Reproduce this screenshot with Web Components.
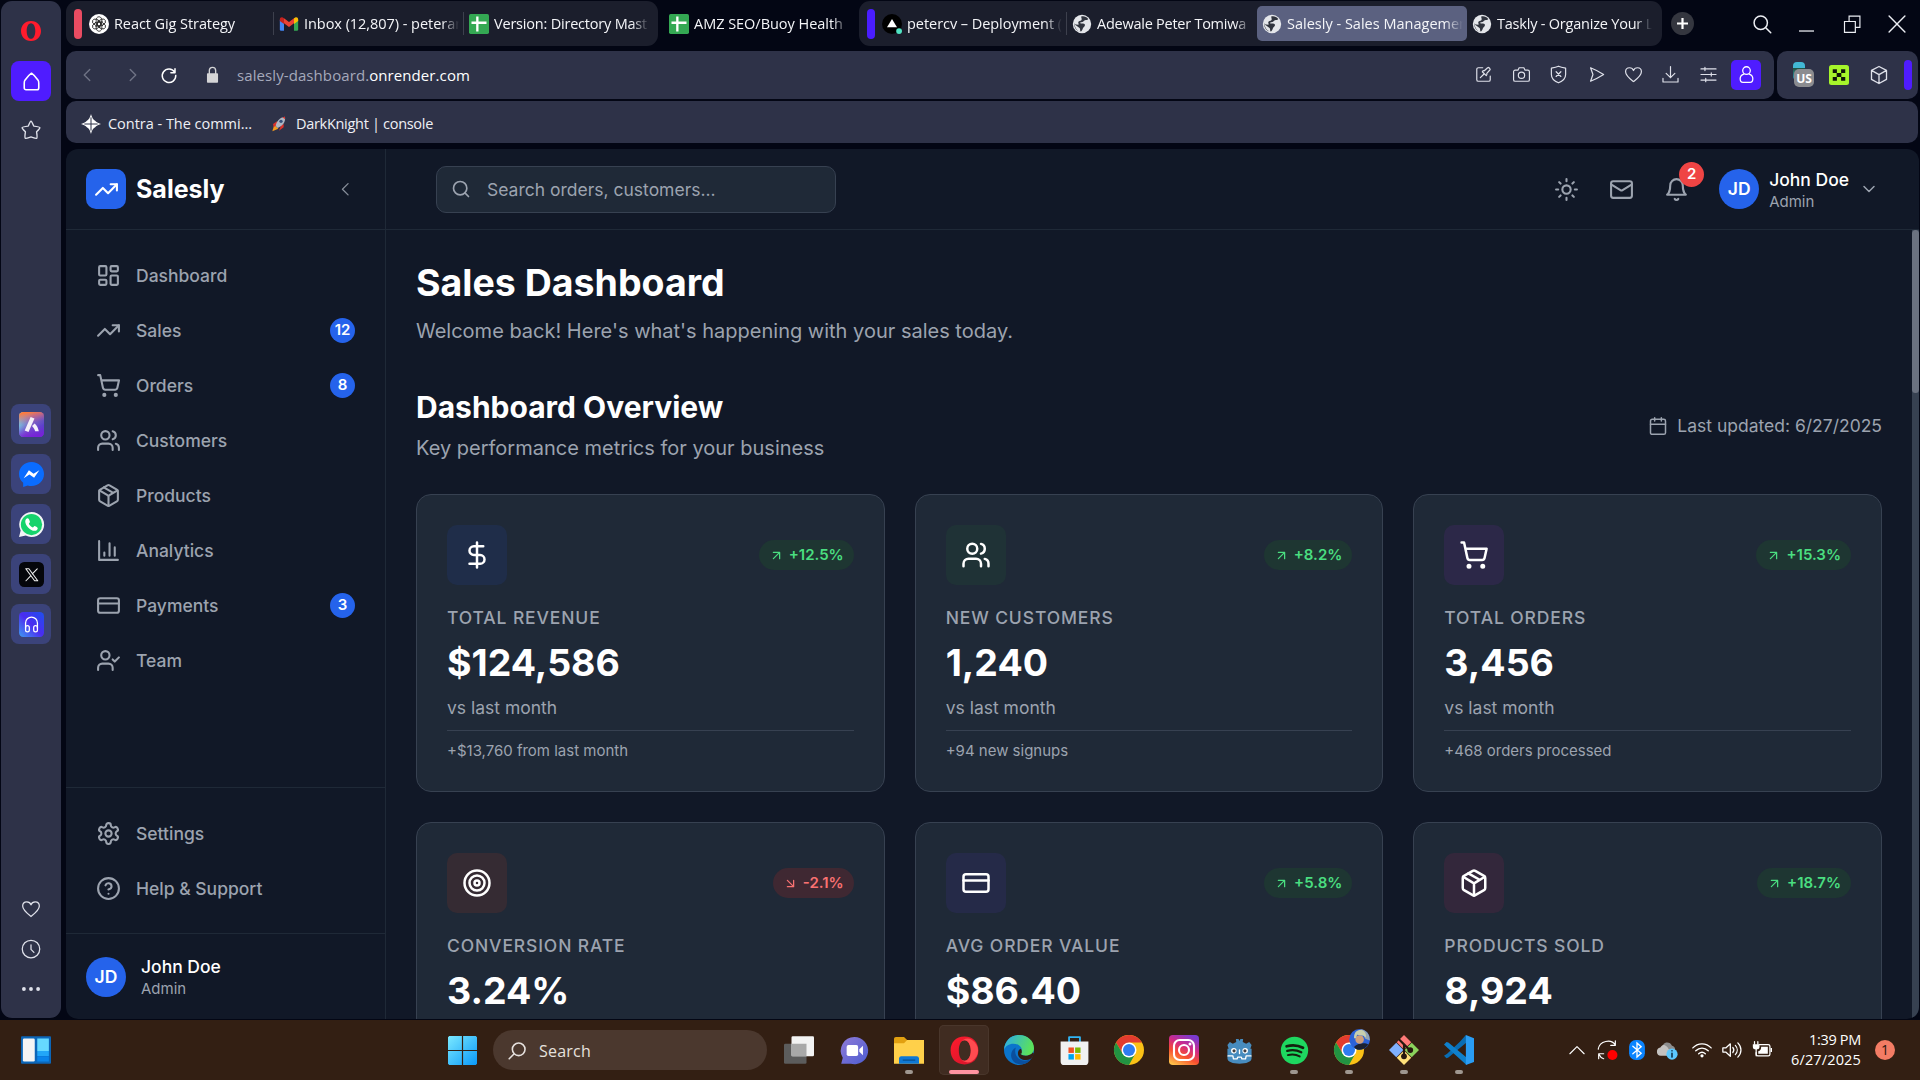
<!DOCTYPE html>
<html lang="en">
<head>
<meta charset="utf-8">
<title>Salesly - Sales Management</title>
<style>
html,body{margin:0;width:1920px;height:1080px;overflow:hidden;background:#030614}
body{font-family:Inter,"Liberation Sans",sans-serif;color:#fff}
</style>
</head>
<body>
<desktop-screen></desktop-screen>
<script>
const ICONS = {
  dashboard:'<rect x="3" y="3" width="7" height="9" rx="1"/><rect x="14" y="3" width="7" height="5" rx="1"/><rect x="14" y="12" width="7" height="9" rx="1"/><rect x="3" y="16" width="7" height="5" rx="1"/>',
  trend:'<path d="M22 7 13.5 15.5 8.5 10.5 2 17"/><path d="M16 7h6v6"/>',
  cart:'<circle cx="8" cy="21" r="1"/><circle cx="19" cy="21" r="1"/><path d="M2.05 2.05h2l2.66 12.42a2 2 0 0 0 2 1.58h9.78a2 2 0 0 0 1.95-1.57l1.65-7.43H5.12"/>',
  users:'<path d="M16 21v-2a4 4 0 0 0-4-4H6a4 4 0 0 0-4 4v2"/><circle cx="9" cy="7" r="4"/><path d="M22 21v-2a4 4 0 0 0-3-3.87M16 3.13a4 4 0 0 1 0 7.75"/>',
  package:'<path d="M11 21.73a2 2 0 0 0 2 0l7-4A2 2 0 0 0 21 16V8a2 2 0 0 0-1-1.73l-7-4a2 2 0 0 0-2 0l-7 4A2 2 0 0 0 3 8v8a2 2 0 0 0 1 1.73z"/><path d="M12 22V12M3.3 7l7.703 4.734a2 2 0 0 0 1.994 0L20.7 7M7.5 4.27l9 5.15"/>',
  chart:'<path d="M3 3v18h18M18 17V9M13 17V5M8 17v-3"/>',
  card:'<rect x="2" y="5" width="20" height="14" rx="2"/><path d="M2 10h20"/>',
  usercheck:'<path d="M16 21v-2a4 4 0 0 0-4-4H6a4 4 0 0 0-4 4v2"/><circle cx="9" cy="7" r="4"/><path d="M16 11l2 2 4-4"/>',
  settings:'<path d="M12.22 2h-.44a2 2 0 0 0-2 2v.18a2 2 0 0 1-1 1.73l-.43.25a2 2 0 0 1-2 0l-.15-.08a2 2 0 0 0-2.73.73l-.22.38a2 2 0 0 0 .73 2.73l.15.1a2 2 0 0 1 1 1.72v.51a2 2 0 0 1-1 1.74l-.15.09a2 2 0 0 0-.73 2.73l.22.38a2 2 0 0 0 2.73.73l.15-.08a2 2 0 0 1 2 0l.43.25a2 2 0 0 1 1 1.73V20a2 2 0 0 0 2 2h.44a2 2 0 0 0 2-2v-.18a2 2 0 0 1 1-1.73l.43-.25a2 2 0 0 1 2 0l.15.08a2 2 0 0 0 2.73-.73l.22-.39a2 2 0 0 0-.73-2.73l-.15-.08a2 2 0 0 1-1-1.74v-.5a2 2 0 0 1 1-1.74l.15-.09a2 2 0 0 0 .73-2.73l-.22-.38a2 2 0 0 0-2.73-.73l-.15.08a2 2 0 0 1-2 0l-.43-.25a2 2 0 0 1-1-1.73V4a2 2 0 0 0-2-2z"/><circle cx="12" cy="12" r="3"/>',
  help:'<circle cx="12" cy="12" r="10"/><path d="M9.09 9a3 3 0 0 1 5.83 1c0 2-3 3-3 3M12 17h.01"/>',
  left:'<path d="m15 18-6-6 6-6"/>', right:'<path d="m9 18 6-6-6-6"/>', down:'<path d="m6 9 6 6 6-6"/>',
  search:'<circle cx="11" cy="11" r="8"/><path d="m21 21-4.3-4.3"/>',
  sun:'<circle cx="12" cy="12" r="4"/><path d="M12 2v2M12 20v2M4.93 4.93l1.41 1.41M17.66 17.66l1.41 1.41M2 12h2M20 12h2M6.34 17.66l-1.41 1.41M19.07 4.93l-1.41 1.41"/>',
  mail:'<rect x="2" y="4" width="20" height="16" rx="2"/><path d="m22 7-8.97 5.7a1.94 1.94 0 0 1-2.06 0L2 7"/>',
  bell:'<path d="M6 8a6 6 0 0 1 12 0c0 7 3 9 3 9H3s3-2 3-9M10.3 21a1.94 1.94 0 0 0 3.4 0"/>',
  calendar:'<rect x="3" y="4" width="18" height="18" rx="2"/><path d="M8 2v4M16 2v4M3 10h18"/>',
  up:'<path d="M7 7h10v10M7 17 17 7"/>', dn:'<path d="m7 7 10 10M17 7v10H7"/>',
  dollar:'<path d="M12 2v20M17 5H9.5a3.5 3.5 0 0 0 0 7h5a3.5 3.5 0 0 1 0 7H6"/>',
  target:'<circle cx="12" cy="12" r="10"/><circle cx="12" cy="12" r="6"/><circle cx="12" cy="12" r="2"/>',
  /* browser chrome */
  opera:'<path fill="#ff1b2d" stroke="none" fill-rule="evenodd" d="M12 2c6.300 0 10 4.600 10 10s-3.700 10-10 10S2 17.400 2 12 5.700 2 12 2zm0 2.200c-2.800 0-4.300 3.600-4.300 7.800s1.500 7.800 4.300 7.800 4.300-3.600 4.300-7.800-1.500-7.800-4.300-7.800z"/>',
  home:'<path d="M12 2.500c3 2 5 4.500 7.500 8 .6.900.8 2 .8 3.500v5.500a2 2 0 0 1-2 2H5.700a2 2 0 0 1-2-2V14c0-1.500.2-2.600.8-3.500C7 7 9 4.500 12 2.500z"/>',
  star:'<path d="M12 2.500c.6 0 1 .6 3 5.200 5 .6 6.500.9 6.700 1.700.2.700-.5 1.500-3.600 4.600.6 4.600.9 6.300.2 6.900-.7.500-2 0-6.300-1.300-4.300 1.300-5.600 1.800-6.300 1.300-.7-.6-.4-2.300.2-6.900-3.100-3.100-3.800-3.900-3.600-4.600.2-.8 1.700-1.100 6.700-1.700 2-4.600 2.400-5.200 3-5.200z"/>',
  heart:'<path d="M12 21C9.500 19 2 13.500 2 8.500 2 5.500 4 3.500 7 3.500c2.300 0 4.200 1.300 5 3.500.8-2.200 2.700-3.500 5-3.500 3 0 5 2 5 5 0 5-7.500 10.500-10 12.500z"/>',
  clock:'<circle cx="12" cy="12" r="10.500"/><path d="M12 7v5.500l3.500 3.500"/>',
  dots:'<g fill="currentColor" stroke="none"><circle cx="3.500" cy="12" r="2.300"/><circle cx="12" cy="12" r="2.300"/><circle cx="20.500" cy="12" r="2.300"/></g>',
  reload:'<path d="M19.500 8A9 9 0 1 0 21 12.500M20 3.500V9h-5.500"/>',
  lock:'<path d="M8 11V7a4 4 0 0 1 8 0v4"/><rect x="5" y="10.500" width="14" height="12" rx="1" fill="currentColor" stroke="none"/>',
  edit:'<path d="M11 3.500H5.500a2 2 0 0 0-2 2v13a2 2 0 0 0 2 2h13a2 2 0 0 0 2-2V14M8 16l5-5M10.500 8.500l5 5c1-1 1-2 .7-3l3.800-4.200c.8-.8.8-1 0-1.800l-1-1c-.8-.8-1-.8-1.800 0l-4.200 3.800c-1-.3-1.800 0-2.500 1.200z"/>',
  camera:'<path d="M4 6.500h3.500L9 3.500h6l1.500 3H20a2 2 0 0 1 2 2v10a2 2 0 0 1-2 2H4a2 2 0 0 1-2-2v-10a2 2 0 0 1 2-2z"/><circle cx="12" cy="13" r="4"/>',
  shield:'<path d="M12 1.500c3 1.500 6 2 9 2.500v8c0 5-4 8.500-9 10.500-5-2-9-5.500-9-10.500V4c3-.5 6-1 9-2.500z"/><path d="m9 8.500 6 6M15 8.500l-6 6"/>',
  send:'<path d="M4.500 3.500c5 2 11 5 16.500 8.500-5.500 3.500-11.500 6.500-16.500 8.500l3-8.500z"/>',
  download:'<path d="M12 2v14M6.500 10.500 12 16l5.500-5.500M2.500 17v4.500h19V17"/>',
  sliders:'<path d="M2.500 5h19M2.500 12h19M2.500 19h19M7.500 3v4M15.500 10v4M8.500 17v4"/>',
  person:'<circle cx="12" cy="7" r="4.800"/><path d="M8.500 11.500c-3 1-4.500 2.700-4.500 6 0 3 1 4.500 3.500 4.500h9c2.500 0 3.500-1.500 3.500-4.500 0-3.300-1.500-5-4.500-6"/>',
  cube:'<path d="m12 1.800 9 4.700v10.800L12 22.200l-9-4.900V6.500zM3 6.500l9 5 9-5M12 11.500v10.700"/>',
  contra:'<path fill="#fff" stroke="none" d="M12 0c1.500 5 2.500 6.500 5 8 1.500 1.800 3 2.700 7 4-4 1.300-5.500 2.200-7 4-2.500 1.500-3.500 3-5 8-1.500-5-2.500-6.500-5-8-1.500-1.800-3-2.700-7-4 4-1.300 5.500-2.200 7-4 2.500-1.500 3.500-3 5-8z"/><path stroke="#2e3248" stroke-width="1.200" d="M12 4.500v15M4.500 12h15"/>',
  rocket:'<g stroke="none"><path fill="#f59b1e" d="M5 13 2 23l9-4z"/><path fill="#d9322b" d="m9 8-6 4 1 5 5-4zM15 14l-3 8 7-5v-5z"/><path fill="#aeb6c2" d="M7 15C8 8 13 2 21 1c1 8-3 13-11 17z"/><path fill="#d9322b" d="M17 1.800 21 1l.1 4z"/><circle cx="15" cy="8" r="2.500" fill="#35507c"/></g>',
  gpt:'<circle cx="12" cy="12" r="12" fill="#fff" stroke="none"/><g stroke="#222" stroke-width="1"><ellipse cx="12" cy="8.800" rx="3.500" ry="5.500"/><ellipse cx="12" cy="8.800" rx="3.500" ry="5.500" transform="rotate(60 12 12)"/><ellipse cx="12" cy="8.800" rx="3.500" ry="5.500" transform="rotate(120 12 12)"/><ellipse cx="12" cy="8.800" rx="3.500" ry="5.500" transform="rotate(180 12 12)"/><ellipse cx="12" cy="8.800" rx="3.500" ry="5.500" transform="rotate(240 12 12)"/><ellipse cx="12" cy="8.800" rx="3.500" ry="5.500" transform="rotate(300 12 12)"/></g>',
  gmail:'<g stroke="none"><path fill="#4285f4" d="M1 7v11.500A1.500 1.500 0 0 0 2.500 20H6V10z"/><path fill="#34a853" d="M18 10v10h3.500a1.500 1.500 0 0 0 1.500-1.500V7z"/><path fill="#ea4335" d="M6 11V5l6 4.500L18 5v6l-6 4.500z"/><path fill="#c5221f" d="M1 6.500v2L6 12V5L4.500 4.200C3 3.200 1 4.200 1 6.500z"/><path fill="#fbbc04" d="M23 6.500v2L18 12V5l1.500-.8C21 3.200 23 4.200 23 6.500z"/></g>',
  sheets:'<rect width="24" height="24" rx="2" fill="#34a853" stroke="none"/><path stroke="#fff" stroke-width="2.800" stroke-linecap="butt" d="M10 3v18M3 10.500h18"/>',
  vercel:'<circle cx="12" cy="12" r="12" fill="#000" stroke="none"/><path fill="#fff" stroke="none" d="m12 6 6 10H6z"/><circle cx="20.500" cy="20.500" r="3.500" fill="#50e3c2" stroke="none"/>',
  globe:'<circle cx="12" cy="12" r="11" fill="#e4e6ea" stroke="none"/><path fill="#30343e" stroke="none" d="M11 3c3-1 6.500.2 8.500 3-1 1.500-2.500 1-4 1.500-1.500.8-2 2.500-4.500 2.500-2 .2-1.500 1.500 0 1.500 2 0 4-.2 4.500 1.500.5 2-2 2.500-2.500 4.500-.5 1.500-1.500 3.500-2.500 3.500s-.5-2-1-3.500C9 16 6 15 4.500 13.500L3 11c0 5 3 9 7 10C5 20.500 2.500 16 2.700 11.500c1.500 1 3.300 1.500 4.800 1.500 1.500-.5-1-2.500.5-4 1.500-1 3-.5 3.500-2C12 5.500 11 4.500 11 3z"/>',
  magnify:'<circle cx="10.500" cy="10.500" r="8"/><path d="m16.500 16.500 6 6"/>',
  minimize:'<path stroke-linecap="butt" d="M2.500 21.500h19"/>',
  restore:'<path stroke-linejoin="miter" d="M3 9h13v13H3zM8.500 9V2.500h13V16H16"/>',
  close:'<path d="m2.500 2.500 19 19M21.500 2.500l-19 19"/>',
  grass:'<rect width="24" height="24" rx="3" fill="#a6f52b" stroke="none"/><path fill="#10160a" stroke="none" d="M4.500 5h5v4.700h5V5h5v4.700h-4.700v4.600h4.700V19h-5v-4.700h-5V19h-5v-4.700h4.700V9.700H4.500z"/>',
  /* sidebar applications */
  aria:'<defs><linearGradient id="a" x1="0" y1=".3" x2="1" y2=".7"><stop stop-color="#6adcea"/><stop offset=".45" stop-color="#7a60c8"/><stop offset="1" stop-color="#4c46c8"/></linearGradient><linearGradient id="b" x1=".4" y1="0" x2=".6" y2="1"><stop stop-color="#ff7a3c"/><stop offset=".45" stop-color="#d0609a" stop-opacity=".1"/><stop offset=".6" stop-color="#7a20d8" stop-opacity=".2"/><stop offset="1" stop-color="#7a20d8"/></linearGradient></defs><rect width="24" height="24" rx="4" fill="url(#a)" stroke="none"/><rect width="24" height="24" rx="4" fill="url(#b)" stroke="none"/><path stroke="#f5f1fa" stroke-width="4" stroke-linecap="butt" d="M7.300 18.500 13 5.500"/><path fill="#f5f1fa" stroke="none" d="m12.500 13.500 2.500-2.500c2 1.500 3.500 4.500 4 7.500h-3.500c-.5-2-1.500-3.500-3-5z"/>',
  messenger:'<path fill="#0a6cff" stroke="none" d="M12 0c6.800 0 12 5 12 11.500S18.800 23 12 23c-1.300 0-2.500-.2-3.600-.5L4 24v-4C1.500 18 0 15 0 11.500 0 5 5.200 0 12 0z"/><path fill="#fff" stroke="none" d="m4.500 15.500 5-7.500 4.500 3.300 5.500-3.300-5 7.200-4.500-3.200z"/>',
  whatsapp:'<path fill="#f2f4f6" stroke="none" d="M12 0a12 12 0 1 1-5.500 22.600L0 24l1.600-6.300A12 12 0 0 1 12 0z"/><circle cx="12" cy="12" r="10.200" fill="#16d36c" stroke="none"/><path fill="#fff" stroke="none" d="M8.500 6c-1.500 0-2.500 1.500-2.500 3 0 4 5 9 9 9 1.500 0 3-1 3-2.500 0-.8-2.500-2-3-2-.7 0-1.200 1.300-1.700 1.300-1 0-3.800-2.500-3.800-3.700 0-.5 1-1 1-1.600S9.300 6 8.500 6z"/>',
  x:'<rect width="24" height="24" rx="5" fill="#05060b" stroke="none"/><path stroke="#f2f2f2" stroke-width="1" d="M6.500 6.500h3l8.500 11.500h-3zM17.500 6.500l-4.700 5M11 13.500 6.700 18"/>',
  headphones:'<defs><linearGradient id="h" x1="0" y1="1" x2="1" y2="0"><stop stop-color="#3f9bf0"/><stop offset=".5" stop-color="#4b2cf0"/><stop offset="1" stop-color="#1d50ee"/></linearGradient></defs><rect width="24" height="24" rx="4" fill="url(#h)" stroke="none"/><g stroke="#fff" stroke-width="1.200"><path d="M6.300 15.500v-5a5.700 5.700 0 0 1 11.400 0v5"/><rect x="6.300" y="13" width="3.600" height="6" rx="1.800"/><rect x="14.100" y="13" width="3.600" height="6" rx="1.800"/></g>',
  /* taskbar */
  widgets:'<g stroke="none"><rect width="24" height="22" y="1" rx=".8" fill="#0c66b8"/><rect x="1.500" y="2.800" width="9.500" height="18.400" rx="1" fill="#f4f4f4"/><rect x="13" y="2.800" width="9.300" height="10" fill="#66d9ff"/><rect x="13" y="12.800" width="9.300" height="4" fill="#22a7f8"/><rect x="13" y="17" width="9.300" height="4.200" fill="#0a84ea"/></g>',
  windows:'<defs><linearGradient id="w" gradientUnits="userSpaceOnUse" x1="0" y1="0" x2="24" y2="24"><stop stop-color="#7be9ff"/><stop offset="1" stop-color="#0a98f8"/></linearGradient></defs><path fill="url(#w)" stroke="none" d="M1 0h10.500v11.500H0V1zM12.500 0H23l1 1v10.500H12.500zM0 12.500h11.500V24H1l-1-1zM12.500 12.500H24V23l-1 1H12.500z"/>',
  taskview:'<g stroke="none"><rect x="0" y="7" width="18" height="16" rx="1" fill="#5c5c5c"/><rect x="6" y="1" width="18" height="16" rx="1" fill="#f3f3f3"/><rect x="6" y="7" width="12" height="10" fill="#a9a9a9"/></g>',
  chat:'<defs><linearGradient id="c" x1="0" y1="0" x2="1" y2="1"><stop stop-color="#8f7bd8"/><stop offset="1" stop-color="#4c5cd0"/></linearGradient></defs><path fill="url(#c)" stroke="none" d="M12 .800a11.300 11.300 0 1 1-3 22.200L1 23l1.300-5A11.300 11.300 0 0 1 12 .800z"/><rect x="5.500" y="7.500" width="9.500" height="9" rx="1.500" fill="#fff" stroke="none"/><path fill="#fff" stroke="none" d="m16 11 3-3v8l-3-3z"/>',
  explorer:'<g stroke="none"><path fill="#e2a010" d="M0 3a1.500 1.500 0 0 1 1.500-1.500H8L10.500 4H22v6H0z"/><path fill="#ffd04a" d="M0 6.500h8L10.500 4H24v19H0z"/><path fill="#0f78d4" d="M4 23v-4.500A1.800 1.800 0 0 1 5.800 17h12.400a1.800 1.800 0 0 1 1.800 1.500V23z"/><path fill="#0a5599" d="M7 19.500h10v1.200H7z"/></g>',
  operabig:'<defs><linearGradient id="o" x1="0" y1="0" x2="1" y2="1"><stop stop-color="#ff1b2d"/><stop offset="1" stop-color="#d0142a"/></linearGradient></defs><path fill="url(#o)" stroke="none" fill-rule="evenodd" d="M12 .500c7.200 0 11.500 5 11.500 11.500S19.200 23.500 12 23.500.500 18.500.500 12 4.800.500 12 .500zm0 3C9 3.500 7.300 7.500 7.300 12S9 20.500 12 20.500s5.200-4 5.200-8.500S15 3.500 12 3.500z"/><path fill="#ff4b50" stroke="none" d="M12 20.500c3 0 5.200-4 5.200-8.500S15 3.500 12 3.500c-1.500 0-2.800.8-3.500 2 2-3 6-4.500 9.500-2.500 7 4.500 7 13.500 0 18-3.500 2-7.500.5-9.500-2.500.7 1.200 2 2 3.500 2z"/>',
  edge:'<defs><linearGradient id="e" x1="0" y1="0" x2="1" y2=".3"><stop stop-color="#2aa9ee"/><stop offset="1" stop-color="#5be25b"/></linearGradient></defs><circle cx="12" cy="12" r="12" fill="#0b74cc" stroke="none"/><path fill="url(#e)" stroke="none" d="M0 12C.500 4.500 5.500 0 12 0c7 0 12 4.800 12 10.500 0 4-3 6-6.500 6-2.500 0-4.300-.8-4.300-1.700 0-.6 1-1.200 1-2.800C14.200 9 11 7 7.500 7 4 7 1 9 0 12z"/><path fill="#0a4f9e" stroke="none" d="M9.500 10c-2 5 1.500 10.500 7 10.500 2 0 4-.8 5.300-1.500C19 24 11 25 7.500 21S6 11.500 9.500 10z"/><path fill="#331f13" stroke="none" d="M13.200 14.800c0 .9 1.800 1.700 4.300 1.700 2 0 4.200-.8 5.500-2.500l1 1c-.5 2-1.500 3-2.500 4-3 1.500-7 1.500-9.500-1.500-1.500-2.500-1-5.500 1.500-6.500 1 1.300.7 2.800.7 3.800z"/>',
  store:'<path stroke="#31b5f5" stroke-width="1.500" d="M7.500 5V1h9v4"/><path fill="#f1f1f1" stroke="none" d="M.5 4.500h23V21a3 3 0 0 1-3 3h-17a3 3 0 0 1-3-3z"/><g stroke="none"><path fill="#f25022" d="M7 9.500h4.500V14H7z"/><path fill="#7fba00" d="M12.500 9.500H17V14h-4.500z"/><path fill="#00a4ef" d="M7 15h4.500v4.500H7z"/><path fill="#ffb900" d="M12.500 15H17v4.500h-4.500z"/></g>',
  chrome:'<g stroke="none"><circle cx="12" cy="12" r="12" fill="#fbc116"/><path fill="#e33b2e" d="M1.600 6A12 12 0 0 1 22.400 6H12L7 15z"/><path fill="#229342" d="M1.600 6A12 12 0 0 0 12 24l5-9-10 0z"/><circle cx="12" cy="12" r="6" fill="#fff"/><circle cx="12" cy="12" r="4.800" fill="#2f7cf0"/></g>',
  instagram:'<defs><linearGradient id="i" x1=".2" y1="1" x2=".7" y2="0"><stop stop-color="#ffc04a"/><stop offset=".35" stop-color="#f8502e"/><stop offset=".65" stop-color="#d02a88"/><stop offset="1" stop-color="#7a3ad0"/></linearGradient></defs><rect width="24" height="24" rx="3" fill="url(#i)" stroke="none"/><g stroke="#fff" stroke-width="1.700"><rect x="4" y="4" width="16" height="16" rx="4.500"/><circle cx="12" cy="12" r="4"/></g><circle cx="16.800" cy="7.200" r="1.200" fill="#fff" stroke="none"/>',
  godot:'<path fill="#478cbf" stroke="none" d="M2 7.500 4 5l2.500 1.500L9.300 5 9 2.500h2.200l.8 1.600.8-1.600H15l-.3 2.500 2.800 1.500L20 5l2 2.500-1 3h1v8c0 3-4.500 4.500-10 4.500S2 21.500 2 18.500v-8h1z"/><path stroke="#fff" stroke-width="1.100" d="M2.500 16.500h4l.5 2.500h3l.5-1.500h3l.5 1.500h3l.5-2.500h4M12 11.500v3"/><g stroke="none"><circle cx="7.300" cy="12.300" r="2.300" fill="#fff"/><circle cx="16.700" cy="12.300" r="2.300" fill="#fff"/><circle cx="7.500" cy="12.300" r="1.300" fill="#414042"/><circle cx="16.500" cy="12.300" r="1.300" fill="#414042"/></g>',
  spotify:'<circle cx="12" cy="12" r="11.300" fill="#1ed760" stroke="none"/><g stroke="#14210f"><path stroke-width="2.300" d="M5.500 8.500c4.500-1.300 9.500-.9 13.500 1.300"/><path stroke-width="1.900" d="M6 12.300c4-1.200 8-.7 11.600 1.200"/><path stroke-width="1.600" d="M6.500 15.800c3.400-.9 6.800-.6 9.800 1.100"/></g>',
  chromeuser:'<g stroke="none"><circle cx="12" cy="12" r="12" fill="#fbc116"/><path fill="#e33b2e" d="M1.600 6A12 12 0 0 1 22.400 6H12L7 15z"/><path fill="#229342" d="M1.600 6A12 12 0 0 0 12 24l5-9-10 0z"/><circle cx="12" cy="12" r="6" fill="#fff"/><circle cx="12" cy="12" r="4.800" fill="#2f7cf0"/><circle cx="20.500" cy="3.500" r="8.300" fill="#2c62d8"/><path fill="#1b2030" d="M16 9.500c2-2.500 8-4 11.500-2-2 3-5 4.500-7.500 4.300-1.500 0-3-1-4-2.300z"/><path fill="#93a4b5" d="M21-4.700a8.300 8.300 0 0 1 7.700 9L25 3z"/><circle cx="20.500" cy="3.500" r="3.400" fill="#cf9f7c"/><path fill="#c9cfae" d="M16 2.500c0-5 2.500-6.500 5-6.500 2.800 0 5 2 4.500 6l-2-1.500-5-.7-1 2.700z"/></g>',
  git:'<g stroke="none"><path fill="#ff7a78" d="m12 0 5.800 5.800-5.800 5.800-5.800-5.800z"/><path fill="#7fb1ff" d="m0 12 5.800-5.800 5.800 5.800-5.800 5.800z"/><path fill="#8bd35c" d="m24 12-5.800-5.800-5.800 5.800 5.800 5.800z"/><path fill="#ffe07a" d="m12 24 5.800-5.800-5.800-5.800-5.800 5.800z"/><circle cx="12" cy="17" r="2.300" fill="#26170e"/><circle cx="17" cy="12" r="2.300" fill="#26170e"/></g><path stroke="#26170e" stroke-width="1.700" d="m8.500 4 3.500 3.500V16M12 7.500l4.500 4.500"/>',
  vscode:'<g stroke="none"><path fill="#0a6db3" d="m17.500 0-5 5.500L2.500 15 0 16.500 2 18.500l1.500-.5L18 6z"/><path fill="#0f80cc" d="m0 7.500 2-2 1.500.5L18 18v6L2.500 10z"/><path fill="#2a9df4" d="m17.500 0 6.500 2.500v19L17.500 24z"/></g>',
  chevup:'<path stroke="#fff" stroke-width="1.500" d="m2.500 17 9.500-9.500L21.500 17"/>',
  sync:'<g stroke="#fff" stroke-width="1.400"><path d="M1.500 11C3 1 17-2 22 6M22 1v5.500h-5.500M8 22.500c-2.500-.8-4.500-2.500-5.500-5M2 22.500V16.500h6"/></g><circle cx="18.500" cy="18" r="6" fill="#f00" stroke="none"/>',
  bluetooth:'<rect x="2.500" y="0" width="19" height="24" rx="8" fill="#0a84ff" stroke="none"/><path stroke="#fff" stroke-width="1.600" stroke-linejoin="miter" d="m7 7.500 10 8.500-5 4.500V3.500L17 8 7 16.500"/>',
  cloud:'<path fill="#c4c2c0" stroke="none" d="M4.500 19a5 5 0 0 1-.5-9.900A7.500 7.500 0 0 1 17 8.500l2 10.500z"/><path fill="#8d8d8d" stroke="none" d="M7.500 5.500c3-4 9-2.500 10.500 1.500 3 .6 4.500 3.500 3.500 6.500L14 11c-1-3-4-4.500-6.500-5.500z"/><circle cx="18" cy="17" r="6.700" fill="#5cc8ff" stroke="none"/><path stroke="#10304a" stroke-width="1.900" d="M18 16v4.500M18 13h.01"/>',
  wifi:'<g stroke="#fff" stroke-width="1.600"><path d="M1 9.500c6-6.500 16-6.500 22 0M4.500 13c4.300-4.400 10.700-4.400 15 0M8 16.500c2.500-2.300 5.500-2.300 8 0"/></g><circle cx="12" cy="19" r="1.900" fill="#fff" stroke="none"/>',
  volume:'<g stroke="#fff" stroke-width="1.500"><path d="M1 9.500v5h3.500L10 19.500v-15L4.500 9.500zM13 9c1.500 1.800 1.500 4.200 0 6M16 6.500c3 3.200 3 7.800 0 11M19 3.500c5 5 5 12 0 17"/></g>',
  battery:'<g stroke="#fff" stroke-width="1.500"><path d="M9 5.500h10.500a2 2 0 0 1 2 2v9.500a2 2 0 0 1-2 2H7a2 2 0 0 1-2-2v-2"/><path d="M3 2v3M7 2v3M5 10v9" /></g><path fill="#fff" stroke="none" d="M1 5h8v3.500c0 2-1.500 3-4 3s-4-1-4-3zM11 8h8v8.500H7.500v-3C10 13 11 11 11 8zM22.300 9.500H24v5h-1.700z"/>'
};

/* Registers an element whose shadow root is filled from a template built of the host's attributes. */
const define = (tag, css, view, after) => customElements.define(tag, class extends HTMLElement {
  connectedCallback() {
    if (this.shadowRoot) return;
    const root = this.attachShadow({ mode: 'open' });
    const a = n => this.getAttribute(n) ?? '';
    const t = document.createElement('template');
    t.innerHTML = `<style>*{box-sizing:border-box}:host{display:block;box-sizing:border-box}${css}</style>${view(a)}`;
    root.append(t.content.cloneNode(true));
    if (after) after(this, root);
  }
});

define('ui-icon', ':host{flex:none;width:var(--s,24px);height:var(--s,24px)}svg{display:block;width:100%;height:100%;overflow:visible}',
  a => `<svg viewBox="0 0 24 24" fill="none" stroke="currentColor" stroke-width="${a('stroke') || 2}" stroke-linecap="round" stroke-linejoin="round">${ICONS[a('name')]}</svg>`,
  (h) => h.style.setProperty('--s', (h.getAttribute('size') || 24) + 'px'));

/* One line of text, tracked so that it takes the given width. */
define('fit-text', ':host{white-space:nowrap;flex:none;font-family:"Open Sans","Noto Sans",sans-serif}span{display:inline-block}',
  () => '<span><slot></slot></span>',
  (h, r) => {
    const n = h.textContent.length, w = +h.getAttribute('w');
    h.style.letterSpacing = ((w - r.querySelector('span').getBoundingClientRect().width) / n).toFixed(3) + 'px';
  });

define('browser-tab', `
:host{display:flex;align-items:center;gap:5px;width:190px;height:35px;padding-left:6px;font-size:14.500px;color:#f4f5f8;line-height:20px;flex:none}
:host([sep]){border-left:1px solid transparent;padding-left:5px;background:linear-gradient(#3d404d,#3d404d) left 50%/1px 23px no-repeat;background-origin:border-box}
:host([active]){width:210px;background:#5b6180;border-radius:5px;margin-left:1px;padding-left:5px}
.i{width:20px;display:flex;justify-content:center;flex:none}
.t{width:164px;flex:none;-webkit-mask:linear-gradient(90deg,#000 138px,transparent 155px)}
:host([active]) .t{width:184px;-webkit-mask:linear-gradient(90deg,#000 158px,transparent 176px)}`,
  a => `<div class="i"><ui-icon name="${a('icon')}" size="${a('size') || 20}"></ui-icon></div><div class="t"><fit-text w="${a('w')}">${a('label')}</fit-text></div>`);

define('tab-group', `:host{display:flex;align-items:center;height:45px;background:#1b1e2c;border-radius:11px;padding:0 5px 0 8px;flex:none}
i{width:8px;height:30px;border-radius:4px;background:var(--c);margin-right:1px}`, a => `<i style="--c:${a('color')}"></i><slot></slot>`);

define('tab-strip', `:host{display:flex;align-items:center;height:45px;margin-top:1px}
.plus{width:23px;height:23px;border-radius:50%;background:#34363f;display:grid;place-items:center;margin-left:9px}
.win{display:flex;margin-left:auto;margin-right:1px;color:#eceef3}.win>*{width:45px;display:grid;place-items:center;height:45px}`,
  () => `<tab-group color="#ea4c62">
<browser-tab icon="gpt" label="React Gig Strategy" w="121"></browser-tab>
<browser-tab sep icon="gmail" label="Inbox (12,807) - peteran" w="160"></browser-tab>
<browser-tab sep icon="sheets" label="Version: Directory Mast" w="153"></browser-tab></tab-group>
<browser-tab style="margin:0 6px 0 5px" icon="sheets" label="AMZ SEO/Buoy Health" w="149"></browser-tab>
<tab-group color="#4a1dff">
<browser-tab icon="vercel" label="petercv – Deployment (" w="155"></browser-tab>
<browser-tab sep icon="globe" label="Adewale Peter Tomiwa" w="149"></browser-tab>
<browser-tab active icon="globe" label="Salesly - Sales Managemen" w="181"></browser-tab>
<browser-tab icon="globe" label="Taskly - Organize Your L" w="156" style="padding-left:5px"></browser-tab></tab-group>
<div class="plus"><svg width="11" height="11"><path d="M5.500 0v11M0 5.500h11" stroke="#fff" stroke-width="2.200"/></svg></div>
<div class="win"><div><ui-icon name="magnify" size="20" stroke="1.800"></ui-icon></div><div style="margin-right:-8px"><ui-icon name="minimize" size="19" stroke="1.600"></ui-icon></div><div style="margin-left:8px"><ui-icon name="restore" size="20" stroke="1.400"></ui-icon></div><div><ui-icon name="close" size="20" stroke="1.700"></ui-icon></div></div>`);

define('address-bar', `:host{display:flex;gap:3px;height:48px;margin-top:5px;color:#dfe1ea}
.bar,.ext{background:#2e3248;border-radius:10px;display:flex;align-items:center;padding-bottom:1px}
.bar{width:1708px}.ext{width:141px;padding-right:6px;justify-content:flex-end}
.nav{display:flex;align-items:center;width:171px;padding-left:10px}
.url{font-size:15px;color:#a5a9bb;line-height:24px}b{font-weight:400;color:#fff}
.acts{margin-left:auto;display:flex;align-items:center;padding-right:13px}
.acts>div{width:37.400px;height:37px;display:grid;place-items:center}
.acts>.me{width:30px;height:30px;border-radius:5px;background:#4f1cff;margin-left:4px}
.us{position:relative;width:24px;height:24px}
.us i{position:absolute;left:3px;top:-1px;width:12px;height:18px;border-radius:4px;background:linear-gradient(#42b8d4 35%,#254 36%,#39a6c4)}
.us span{position:absolute;left:4px;top:6px;width:20px;height:18px;border-radius:5px;background:#8b8c90;font:700 12px/19px "Open Sans",sans-serif;text-align:center;color:#fff}
.end{width:8px;height:30px;border-radius:4px;background:#4f1cff}`,
  () => `<div class="bar"><div class="nav">
<ui-icon name="left" size="22" stroke="1.500" style="color:#6f7385"></ui-icon>
<ui-icon name="right" size="22" stroke="1.500" style="color:#6f7385;margin-left:24px"></ui-icon>
<ui-icon name="reload" size="18" stroke="2" style="margin-left:16px;color:#fff"></ui-icon>
<ui-icon name="lock" size="19" stroke="1.700" style="margin-left:25px;color:#d4d4d6"></ui-icon></div>
<fit-text class="url" w="233">salesly-dashboard.<b>onrender.com</b></fit-text>
<div class="acts">${['edit','camera','shield','send','heart','download','sliders'].map(n => `<div><ui-icon name="${n}" size="19" stroke="1.500"></ui-icon></div>`).join('')}<div class="me"><ui-icon name="person" size="19" stroke="1.600" style="color:#fff"></ui-icon></div></div></div>
<div class="ext"><div class="us" style="margin-right:15px"><i></i><span>US</span></div><ui-icon name="grass" size="20"></ui-icon><ui-icon name="cube" size="20" stroke="1.600" style="margin:0 15px 0 20px"></ui-icon><div class="end"></div></div>`);

define('bookmark-bar', `:host{display:flex;align-items:center;height:42px;margin-top:2px;background:#2e3248;border-radius:10px;padding:3px 0 0 15px;width:1852px;font-size:14.500px;line-height:20px;color:#eef0f5}`,
  () => `<ui-icon name="contra" size="20"></ui-icon><fit-text w="144" style="margin-left:7px">Contra - The commi...</fit-text><ui-icon name="rocket" size="16" style="margin-left:19px"></ui-icon><fit-text w="137" style="margin-left:9px">DarkKnight | console</fit-text>`);

define('browser-rail', `:host{width:60px;height:1017px;margin:1px 0 0 1px;background:#2e3248;border-radius:11px;display:flex;flex-direction:column;align-items:center;color:#dfe1ea;padding-top:18px;flex:none}
.h{width:40px;height:40px;border-radius:8px;background:#4f1cff;display:grid;place-items:center;margin:18px 0 21px;color:#fff}
.apps{display:flex;flex-direction:column;gap:10px;margin-top:263px}
.apps div{width:40px;height:40px;border-radius:8px;background:#3b437a;display:grid;place-items:center}
.b{margin-top:auto;display:flex;flex-direction:column;gap:20px;align-items:center;margin-bottom:19px;padding-right:1px}`,
  () => `<ui-icon name="opera" size="24"></ui-icon><div class="h"><ui-icon name="home" size="21" stroke="1.800"></ui-icon></div><ui-icon name="star" size="22" stroke="1.500" style="margin:-3px 1px 0 0"></ui-icon>
<div class="apps">${['aria','messenger','whatsapp','x','headphones'].map(n => `<div><ui-icon name="${n}" size="25"></ui-icon></div>`).join('')}</div>
<div class="b">${['heart','clock','dots'].map(n => `<ui-icon name="${n}" size="20" stroke="1.500"></ui-icon>`).join('')}</div>`);

/* Dashboard application */
define('user-avatar', ':host{width:40px;height:40px;border-radius:50%;background:#2563eb;display:grid;place-items:center;font-weight:600;font-size:17.500px;line-height:40px;color:#fff;flex:none}', () => '<slot></slot>');
define('user-name', ':host{display:flex;flex-direction:column}b{font-size:17.500px;line-height:22px;color:#fff;font-weight:500}span{font-size:15px;line-height:22px;color:#9ca3af}', () => '<b>John Doe</b><span>Admin</span>');
define('nav-item', `:host{display:flex;align-items:center;height:50px;padding:0 10px;gap:15px;color:#9ca3af;font-weight:500;font-size:17.500px;line-height:25px}
.n{margin-left:auto;min-width:25px;height:25px;border-radius:13px;background:#2563eb;color:#fff;font-size:15px;font-weight:600;line-height:24px;text-align:center}`,
  a => `<ui-icon name="${a('icon')}" size="25"></ui-icon><slot></slot>${a('count') ? `<div class="n">${a('count')}</div>` : ''}`);
define('app-sidebar', `:host{width:320px;display:flex;flex-direction:column;border-right:1px solid #1f2937;flex:none}
.brand{height:81px;border-bottom:1px solid #1f2937;display:flex;align-items:center;padding:0 29px 0 20px}
.logo{width:40px;height:40px;border-radius:10px;background:#2563eb;display:grid;place-items:center}
h1{margin:0 auto 0 10px;font-size:25px;font-weight:700;line-height:40px;color:#fff}
nav{padding:20px;display:flex;flex-direction:column;gap:5px}
.main{flex:1}.sec{border-top:1px solid #1f2937}
.me{border-top:1px solid #1f2937;height:86px;display:flex;align-items:center;gap:15px;padding-left:20px}.me user-name{padding-top:2px}`,
  () => `<div class="brand"><div class="logo"><ui-icon name="trend" size="25"></ui-icon></div><h1>Salesly</h1><ui-icon name="left" size="22.500" style="color:#858c98" stroke="1.400"></ui-icon></div>
<nav class="main"><nav-item icon="dashboard">Dashboard</nav-item><nav-item icon="trend" count="12">Sales</nav-item><nav-item icon="cart" count="8">Orders</nav-item><nav-item icon="users">Customers</nav-item><nav-item icon="package">Products</nav-item><nav-item icon="chart">Analytics</nav-item><nav-item icon="card" count="3">Payments</nav-item><nav-item icon="usercheck">Team</nav-item></nav>
<nav class="sec"><nav-item icon="settings">Settings</nav-item><nav-item icon="help">Help &amp; Support</nav-item></nav>
<div class="me"><user-avatar>JD</user-avatar><user-name></user-name></div>`);
define('app-header', `:host{height:81px;flex:none;border-bottom:1px solid #1f2937;display:flex;align-items:center;padding:0 40px 0 50px;color:#9ca3af}
.q{width:400px;height:47px;border:1px solid #374151;border-radius:10px;background:#1f2937;display:flex;align-items:center;gap:16px;padding-left:14px;font-size:17.500px;line-height:24px;margin-right:auto}
.q span{padding-top:2px}
.bell{position:relative}.bell span{position:absolute;left:15px;top:-15px;width:25px;height:25px;border-radius:50%;background:#ef4444;color:#fff;font-weight:600;font-size:15px;line-height:24px;text-align:center}
.r{display:flex;align-items:center}.r user-name{padding-top:4px}`,
  () => `<div class="q"><ui-icon name="search" size="20"></ui-icon><span>Search orders, customers...</span></div>
<div class="r"><ui-icon name="sun" size="25"></ui-icon><ui-icon name="mail" size="25" style="margin:0 30px"></ui-icon><div class="bell"><ui-icon name="bell" size="25"></ui-icon><span>2</span></div><user-avatar style="margin:0 10px 0 30px">JD</user-avatar><user-name></user-name><ui-icon name="down" size="20" stroke="1.800" style="margin-left:10px"></ui-icon></div>`);
define('metric-card', `:host{height:298px;background:#1f2937;border:1px solid #374151;border-radius:15px;padding:30px;color:#9ca3af;font-size:17.500px;line-height:25px}
.top{display:flex;justify-content:space-between;align-items:center;height:60px}
.ic{width:60px;height:60px;border-radius:10px;background:var(--tint);display:grid;place-items:center;color:#fff}
.p{height:30px;border-radius:15px;padding:0 10px;display:flex;align-items:center;gap:5px;background:#1e3632;color:#4ade80;font-size:15px;font-weight:600;line-height:30px}
.p.neg{background:#3f2832;color:#f87171}
.l{margin-top:20px;font-weight:500;letter-spacing:.875px;text-transform:uppercase}
.v{margin-top:10px;font-size:37.500px;font-weight:700;line-height:45px;color:#fff}
.c{margin-top:10px}.s{margin-top:10px;border-top:1px solid #374151;padding-top:10px;font-size:15px;line-height:20px}`,
  a => `<div class="top"><div class="ic" style="--tint:${a('tint')}"><ui-icon name="${a('icon')}" size="30"></ui-icon></div><div class="p ${a('pct')[0] === '-' ? 'neg' : ''}"><ui-icon name="${a('pct')[0] === '-' ? 'dn' : 'up'}" size="15"></ui-icon>${a('pct')}</div></div>
<div class="l">${a('label')}</div><div class="v">${a('value')}</div>${a('note') ? `<div class="c">vs last month</div><div class="s">${a('note')}</div>` : ''}`);
define('app-main', `:host{flex:1;min-height:0;display:flex;overflow:hidden}
.c{width:1526px;padding:30px;overflow:hidden}
h1,h2,p{margin:0}h1{font-size:37.500px;font-weight:700;line-height:45px}
p{font-size:20px;line-height:30px;color:#9ca3af}h1+p{margin-top:11px}
.h{display:flex;justify-content:space-between;align-items:center;margin:42.500px 0 31.500px}
h2{font-size:30px;font-weight:700;line-height:37.500px;margin-bottom:6.500px}
.u{display:flex;align-items:center;gap:9px;color:#9ca3af;font-size:17.500px;line-height:25px}
.g{display:grid;grid-template-columns:repeat(3,1fr);gap:30px}
.sb{width:7px;background:#374151}.sb i{display:block;height:163px;background:#6b7280;border-radius:4px}`,
  () => `<div class="c"><h1>Sales Dashboard</h1><p>Welcome back! Here's what's happening with your sales today.</p>
<div class="h"><div><h2>Dashboard Overview</h2><p>Key performance metrics for your business</p></div><div class="u"><ui-icon name="calendar" size="20" stroke="1.800"></ui-icon>Last updated: 6/27/2025</div></div>
<div class="g">
<metric-card icon="dollar" tint="#1f2d49" pct="+12.5%" label="Total Revenue" value="$124,586" note="+$13,760 from last month"></metric-card>
<metric-card icon="users" tint="#1f3236" pct="+8.2%" label="New Customers" value="1,240" note="+94 new signups"></metric-card>
<metric-card icon="cart" tint="#2c2848" pct="+15.3%" label="Total Orders" value="3,456" note="+468 orders processed"></metric-card>
<metric-card icon="target" tint="#352b33" pct="-2.1%" label="Conversion Rate" value="3.24%"></metric-card>
<metric-card icon="card" tint="#252a48" pct="+5.8%" label="Avg Order Value" value="$86.40"></metric-card>
<metric-card icon="package" tint="#33273b" pct="+18.7%" label="Products Sold" value="8,924"></metric-card>
</div></div><div class="sb"><i></i></div>`);
define('sales-app', `:host{display:flex;height:870px;width:1853px;margin-top:6px;background:#111827;border-radius:12px;overflow:hidden}.r{flex:1;display:flex;flex-direction:column;min-width:0}`,
  () => `<app-sidebar></app-sidebar><div class="r"><app-header></app-header><app-main></app-main></div>`);

define('task-icon', `:host{width:50px;height:50px;display:grid;place-items:center;position:relative;flex:none}
:host([active]){background:#402c21;border-radius:5px;box-shadow:inset 0 0 0 1px #49362b}
i{position:absolute;left:21px;bottom:1px;width:8px;height:4px;border-radius:2px;background:#9f9790}
:host([active]) i{left:10px;width:30px;background:#ff93a0}`,
  a => `<ui-icon name="${a('name')}" size="${a('size') || 29}"></ui-icon>${a('run') ? '<i></i>' : ''}`);
define('task-bar', `:host{display:flex;align-items:center;height:60px;width:1920px;background:#331f13;margin-top:1px}
.q{width:274px;height:40px;border-radius:20px;background:#4b382e;display:flex;align-items:center;padding-left:15px;gap:12px;margin:0 7px 0 16px;font-size:16px;line-height:24px;color:#e6e1de}
.q fit-text{padding-top:1px}
.apps{display:flex;gap:5px}
.tray{display:flex;margin-left:auto;align-items:center}.tray>div{width:30px;display:grid;place-items:center}
.tray>.clock{width:84px;font-size:14.500px;line-height:20px;color:#fff;display:flex;flex-direction:column;align-items:flex-end}
.tray>.n{width:20px;height:20px;border-radius:50%;background:#f47c64;color:#2a1510;font:14px/20px "Open Sans",sans-serif;margin:0 25px 0 14px}`,
  () => `<ui-icon name="widgets" size="30" style="margin-left:21px"></ui-icon><ui-icon name="windows" size="29" style="margin-left:397px"></ui-icon>
<div class="q"><ui-icon name="magnify" size="19" stroke="2" style="transform:scaleX(-1)"></ui-icon><fit-text w="52">Search</fit-text></div>
<div class="apps">${[['taskview','',30],['chat'],['explorer',1,30],['operabig',2],['edge','',30],['store'],['chrome','',30],['instagram','',30],['godot'],['spotify',1],['chromeuser',1,30],['git',1,30],['vscode',1,30]].map(([n, r, s]) => `<task-icon name="${n}" size="${s || 29}" run="${r || ''}" ${r === 2 ? 'active' : ''}></task-icon>`).join('')}</div>
<div class="tray">${[['chevup',18],['sync',20],['bluetooth',20],['cloud',20],['wifi',20],['volume',20],['battery',20]].map(([n, s]) => `<div${n === 'wifi' ? ' style="margin-left:5px"' : ''}><ui-icon name="${n}" size="${s}"></ui-icon></div>`).join('')}
<div class="clock"><fit-text w="52">1:39 PM</fit-text><fit-text w="70">6/27/2025</fit-text></div><div class="n">1</div></div>`);

define('desktop-screen', `:host{width:1920px;height:1080px;overflow:hidden;background:#030614}
.top{display:flex;gap:5px;height:1019px}.win{width:1854px}`,
  () => `<div class="top"><browser-rail></browser-rail><div class="win"><tab-strip></tab-strip><address-bar></address-bar><bookmark-bar></bookmark-bar><sales-app></sales-app></div></div><task-bar></task-bar>`);
</script>
</body>
</html>
